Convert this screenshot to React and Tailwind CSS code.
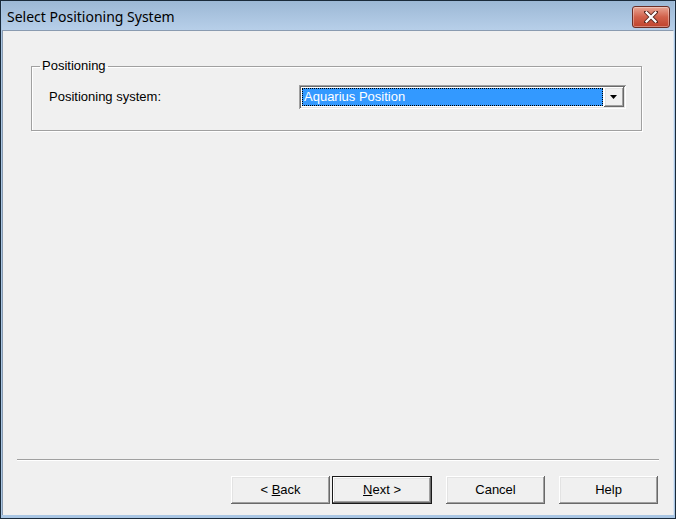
import React from "react";

const raised =
  "shadow-[inset_-1px_-1px_#696969,inset_1px_1px_#ffffff,inset_-2px_-2px_#a0a0a0,inset_2px_2px_#e3e3e3]";

function DialogButton({ children, isDefault }) {
  return (
    <button
      type="button"
      className={
        isDefault
          ? "w-[100px] h-[28px] bg-[#f0f0f0] text-black text-[13px] border border-[#1a1a1a] shadow-[inset_-1px_-1px_#696969,inset_1px_1px_#ffffff,inset_-2px_-2px_#a0a0a0,inset_2px_2px_#e3e3e3] flex items-center justify-center"
          : "w-[99px] h-[28px] bg-[#f0f0f0] text-black text-[13px] shadow-[inset_-1px_-1px_#696969,inset_1px_1px_#ffffff,inset_-2px_-2px_#a0a0a0,inset_2px_2px_#e3e3e3] flex items-center justify-center"
      }
    >
      {children}
    </button>
  );
}

export default function App() {
  return (
    <div
      className="w-[676px] h-[519px] flex flex-col bg-[#1a2a3a] p-[1px] overflow-hidden"
      style={{ fontFamily: '"Liberation Sans", Arial, sans-serif' }}
    >
      <div className="flex-1 flex flex-col bg-[#a9c6e4] px-[1px] pb-[3px]">
        {/* caption bar */}
        <div className="h-[29px] flex items-center justify-between bg-gradient-to-b from-[#9cb8d5] to-[#b7cfe9] pl-[5px] pr-[4px]">
          <span
            className="text-[14px] text-black leading-none mt-[3px]"
            style={{ fontFamily: '"Noto Sans", sans-serif' }}
          >
            Select Positioning System
          </span>
          <div className="w-[38px] h-[22px] mt-[3px] rounded-[3px] border border-[#6b2d25] bg-gradient-to-b from-[#e8a493] via-[#d1614b] to-[#c0422c] flex items-center justify-center shadow-[inset_0_0_0_1px_rgba(255,255,255,0.35)]">
            <svg width="14" height="12" viewBox="0 0 14 12">
              <path
                d="M2 1 L12 11 M12 1 L2 11"
                stroke="#5a2a22"
                strokeWidth="4"
                strokeLinecap="square"
              />
              <path
                d="M2.5 1.5 L11.5 10.5 M11.5 1.5 L2.5 10.5"
                stroke="#ffffff"
                strokeWidth="2.2"
                strokeLinecap="square"
              />
            </svg>
          </div>
        </div>

        {/* client area */}
        <div className="flex-1 flex flex-col bg-[#f0f0f0] border-t border-l border-[#8a9bb0] border-r border-r-[#dbe6f2]">
          <div className="flex-1 pt-[28px] pl-[28px] pr-[31px]">
            <fieldset className="border border-[#a0a0a0] shadow-[1px_1px_0_#ffffff,inset_1px_1px_0_#ffffff] h-[72px] pl-[17px] pr-[15px]">
              <legend className="ml-[-9px] px-[2px] text-[13px] text-black leading-[14px]">
                Positioning
              </legend>
              <div className="flex items-center justify-between mt-[12px]">
                <span className="text-[13px] text-black">Positioning system:</span>
                <div className="w-[327px] h-[24px] bg-white flex shadow-[inset_1px_1px_#a0a0a0,inset_-1px_-1px_#ffffff,inset_2px_2px_#696969,inset_-2px_-2px_#e3e3e3] p-[3px] pr-[2px]">
                  <div className="flex-1 bg-[#3399ff] outline-1 outline-dotted outline-[#000] outline-offset-[-1px] text-white text-[13px] leading-[18px] pl-[2px]">
                    Aquarius Position
                  </div>
                  <div
                    className={
                      "w-[20px] h-[20px] mt-[-1px] ml-[1px] bg-[#f0f0f0] flex items-center justify-center " +
                      raised
                    }
                  >
                    <svg width="8" height="5" viewBox="0 0 8 5">
                      <path d="M0 0 H7 L3.5 4 Z" fill="#000" />
                    </svg>
                  </div>
                </div>
              </div>
            </fieldset>
          </div>

          {/* separator and buttons */}
          <div className="px-[14px]">
            <div className="h-[2px] border-t border-[#a0a0a0] border-b border-b-[#ffffff]" />
          </div>
          <div className="flex justify-end items-center pr-[15px] pt-[15px] pb-[11px]">
            <DialogButton>
              &lt;&nbsp;<span className="underline">B</span>ack
            </DialogButton>
            <div className="ml-[2px]">
              <DialogButton isDefault>
                <span className="underline">N</span>ext&nbsp;&gt;
              </DialogButton>
            </div>
            <div className="ml-[14px]">
              <DialogButton>Cancel</DialogButton>
            </div>
            <div className="ml-[14px]">
              <DialogButton>Help</DialogButton>
            </div>
          </div>
        </div>
      </div>
    </div>
  );
}
